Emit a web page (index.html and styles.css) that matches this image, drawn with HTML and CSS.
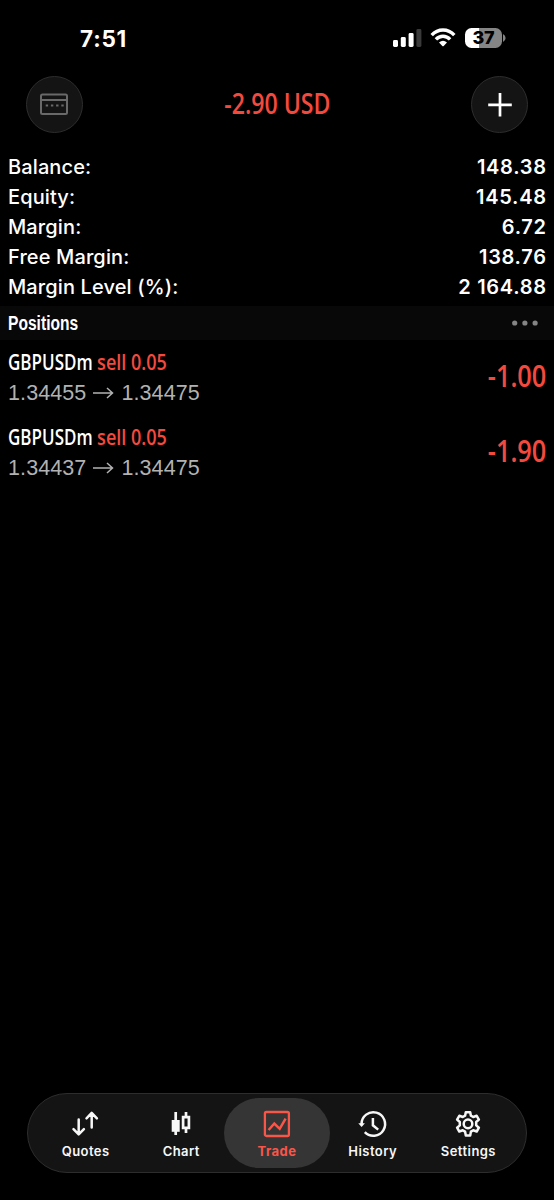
FILE: index.html
```html
<!DOCTYPE html>
<html lang="en">
<head>
<meta charset="utf-8">
<title>Trade</title>
<link rel="stylesheet" href="styles.css">
</head>
<body>
<div class="screen">
  <div class="status">
    <span class="time">7:51</span>
    <div class="status-icons">
      <svg class="signal" width="29" height="18" viewBox="0 0 29 18">
        <rect x="0" y="11" width="5" height="7" rx="1.4" fill="#fff"/>
        <rect x="7.8" y="8" width="5" height="10" rx="1.4" fill="#fff"/>
        <rect x="15.6" y="4" width="5" height="14" rx="1.4" fill="#fff"/>
        <rect x="23.4" y="0" width="5" height="18" rx="1.4" fill="#3a3a3a"/>
      </svg>
      <svg class="wifi" width="26" height="19" viewBox="0 0 26 19">
        <g fill="none" stroke="#fff" stroke-width="3.4">
          <path d="M1.7 7.1C8 .3 18 .3 24.3 7.1"/>
          <path d="M5.9 11.4C10 7.100 16 7.100 20.1 11.4"/>
        </g>
        <path d="M9 14.500Q13 11.200 17 14.500L13.700 17.900Q13 18.600 12.300 17.900Z" fill="#fff"/>
      </svg>
      <div class="battery"><span class="battery-level">37</span></div>
      <svg class="battery-tip" width="3" height="8" viewBox="0 0 3 8"><path d="M0 0Q2.600 1.300 2.600 4T0 8Z" fill="#858585"/></svg>
    </div>
  </div>

  <header class="header">
    <div class="round-button">
      <svg class="card-icon" width="30" height="24" viewBox="0 0 30 24" fill="none" stroke="#696969" stroke-width="2">
        <rect x="2" y="2.500" width="26" height="19.500" rx="1.500"/>
        <path d="M2 8h26"/>
        <path d="M6.700 13.500h2.400m2.800 0h2.400m2.800 0h2.400m2.800 0h2.400" stroke-width="2.200"/>
      </svg>
    </div>
    <h1 class="profit">-2.90 USD</h1>
    <div class="round-button">
      <svg width="25" height="25" viewBox="0 0 25 25" stroke="#fff" stroke-width="2.700"><path d="M13 1v23.600M1.200 12.800h23.600"/></svg>
    </div>
  </header>

  <dl class="account">
    <div class="row"><dt>Balance:</dt><dd>148.38</dd></div>
    <div class="row"><dt>Equity:</dt><dd>145.48</dd></div>
    <div class="row"><dt>Margin:</dt><dd>6.72</dd></div>
    <div class="row"><dt>Free Margin:</dt><dd>138.76</dd></div>
    <div class="row"><dt>Margin Level (%):</dt><dd>2 164.88</dd></div>
  </dl>

  <div class="section">
    <h2 class="section-title">Positions</h2>
    <svg width="26" height="6" viewBox="0 0 26 6" fill="#858585"><circle cx="2.700" cy="3" r="2.600"/><circle cx="12.900" cy="3" r="2.600"/><circle cx="23.100" cy="3" r="2.600"/></svg>
  </div>

  <main class="positions">
    <div class="position">
      <div>
        <div class="symbol">GBPUSDm <span class="order">sell 0.05</span></div>
        <div class="prices">1.34455<svg class="arrow" width="21" height="12" viewBox="0 0 21 12"><path d="M0 6h19.500M14 1l5.500 5-5.500 5"/></svg>1.34475</div>
      </div>
      <div class="result">-1.00</div>
    </div>
    <div class="position">
      <div>
        <div class="symbol">GBPUSDm <span class="order">sell 0.05</span></div>
        <div class="prices">1.34437<svg class="arrow" width="21" height="12" viewBox="0 0 21 12"><path d="M0 6h19.500M14 1l5.500 5-5.500 5"/></svg>1.34475</div>
      </div>
      <div class="result">-1.90</div>
    </div>
  </main>

  <nav class="tabs">
    <div class="tab">
      <svg width="28" height="28" viewBox="0 0 28 28" fill="none" stroke="currentColor" stroke-width="2.500" stroke-linecap="round" stroke-linejoin="round"><path d="M6.700 9.500v14M1.500 19.100l5.200 5.200 5.200-5.200M19.700 17.500v-14M14.500 8.300l5.200-5.400L24.900 8.300"/></svg>
      <span>Quotes</span>
    </div>
    <div class="tab">
      <svg width="28" height="28" viewBox="0 0 28 28" fill="none" stroke="currentColor" stroke-width="2.700"><path d="M8.700 2v23"/><rect x="4.700" y="10" width="8" height="11.800" fill="currentColor" stroke="none"/><path d="M19 2v5M19 18v5M16.100 7.200h5.800v10.600h-5.800z"/></svg>
      <span>Chart</span>
    </div>
    <div class="tab tab-active">
      <svg width="28" height="28" viewBox="0 0 28 28" fill="none" stroke="currentColor" stroke-width="2.300"><rect x="1.900" y="2" width="24" height="24" rx="1.500"/><path d="M5.600 20l5.700-6.500 5.400 5.300L22.600 8.700" stroke-width="2.500"/></svg>
      <span>Trade</span>
    </div>
    <div class="tab">
      <svg width="28" height="28" viewBox="0 0 28 28" fill="none" stroke="currentColor" stroke-width="2.500"><path d="M2.500 14A11.800 11.800 0 1 1 5.800 22.200"/><path d="M-.7 13.200h6.600L2.600 16.900z" fill="currentColor" stroke="none"/><path d="M13.900 7.900v7.400l5.300 4.300"/></svg>
      <span>History</span>
    </div>
    <div class="tab">
      <svg width="28" height="28" viewBox="0 0 28 28" fill="none" stroke="currentColor" stroke-width="2.500" stroke-linejoin="round"><path d="M11.800 2.200h4.400l.7 3.500 2.300 1.300 3.500-1.200 2.200 3.800-2.700 2.400v3.400l2.700 2.300-2.200 3.800-3.500-1.200-2.300 1.300-.7 3.900h-4.400l-.7-3.900-2.300-1.300-3.500 1.200-2.200-3.800 2.700-2.300v-3.400L3.100 9.600l2.200-3.800L8.800 7l2.300-1.300z"/><circle cx="14" cy="13.900" r="4.300"/></svg>
      <span>Settings</span>
    </div>
  </nav>
</div>
</body>
</html>
```
FILE: styles.css
```css
* { box-sizing: border-box; }

body {
  margin: 0;
  background: #000;
  color: #fff;
  font-family: Inter, "Liberation Sans", sans-serif;
}

h1, h2, dl, dd { margin: 0; }
svg { display: block; flex: none; overflow: visible; }

.screen {
  width: 554px;
  height: 1200px;
  display: flex;
  flex-direction: column;
}

.status {
  height: 76px;
  padding: 0 48px 0 80px;
  display: flex;
  justify-content: space-between;
  align-items: center;
}

.time { font-size: 22.5px; font-weight: 700; letter-spacing: .8px; }
.status-icons { display: flex; align-items: center; padding-bottom: 1px; }
.wifi { margin: 0 9px 0 8px; }

.battery {
  width: 37px;
  height: 20px;
  border-radius: 6.5px;
  background: linear-gradient(90deg, #fff 37%, #858585 37%);
  color: #000;
  display: grid;
  place-items: center;
}

.battery-level { font-size: 18px; line-height: 20px; font-weight: 800; letter-spacing: -.3px; }
.battery-tip { margin-left: 1px; }

.header {
  height: 56px;
  padding: 0 26px;
  display: flex;
  justify-content: space-between;
  align-items: center;
}

.round-button {
  width: 57px;
  height: 57px;
  border: 1px solid #2d2d2d;
  border-radius: 50%;
  background: #141414;
  display: grid;
  place-items: center;
}

.card-icon { margin-right: 2px; }

.profit {
  color: #f44a3e;
  font: 600 28px/36px "Open Sans", sans-serif;
  padding-bottom: 2px;
  transform: scaleX(.825);
}

.account {
  height: 174px;
  padding: 20px 8px 0;
}

.row {
  display: flex;
  justify-content: space-between;
  height: 30px;
  font-size: 20px;
  line-height: 30px;
}

.row dt { font-weight: 500; letter-spacing: .12px; }
.row dd { font-weight: 600; letter-spacing: .7px; margin-right: -.7px; }

.section {
  height: 34px;
  padding: 0 16px 0 8px;
  background: #080808;
  display: flex;
  justify-content: space-between;
  align-items: center;
}

.section-title {
  font: bold 19.5px/34px "Liberation Sans", sans-serif;
  transform: scaleX(.8);
  transform-origin: left;
}

.positions { flex: 1; }

.position {
  height: 74.5px;
  padding: 7px 8px 0;
  display: flex;
  justify-content: space-between;
}

.symbol {
  font: 600 21px/30px "Open Sans", sans-serif;
  white-space: nowrap;
  transform: scaleX(.81);
  transform-origin: left;
}

.order {
  color: #f44a3e;
  display: inline-block;
  transform: scaleX(1.06);
  transform-origin: left;
}

.prices {
  display: flex;
  align-items: center;
  gap: 7px;
  color: #b2b2b2;
  font: 21.5px/32px "Liberation Sans", sans-serif;
  letter-spacing: .1px;
}

.arrow { fill: none; stroke: #b2b2b2; stroke-width: 1.500; }

.result {
  color: #f44a3e;
  font: 600 30px/58px "Open Sans", sans-serif;
  transform: scaleX(.845);
  transform-origin: right;
}

.tabs {
  width: 500px;
  height: 80px;
  margin: 0 27px 27px;
  padding: 4px 9px;
  border: 1px solid #2d2d2d;
  border-radius: 40px;
  background: #141414;
  display: flex;
  justify-content: center;
}

.tab {
  width: 95.700px;
  height: 70px;
  padding-top: 12px;
  display: flex;
  flex: none;
  flex-direction: column;
  align-items: center;
  gap: 4px;
  color: #f7f7f7;
  font-size: 13px;
  line-height: 18px;
  font-weight: 600;
  letter-spacing: .45px;
}

.tab-active {
  width: 106px;
  margin: 0 -5.150px;
  border-radius: 35px;
  background: #353535;
  color: #f9564a;
  font-weight: 700;
}
```
